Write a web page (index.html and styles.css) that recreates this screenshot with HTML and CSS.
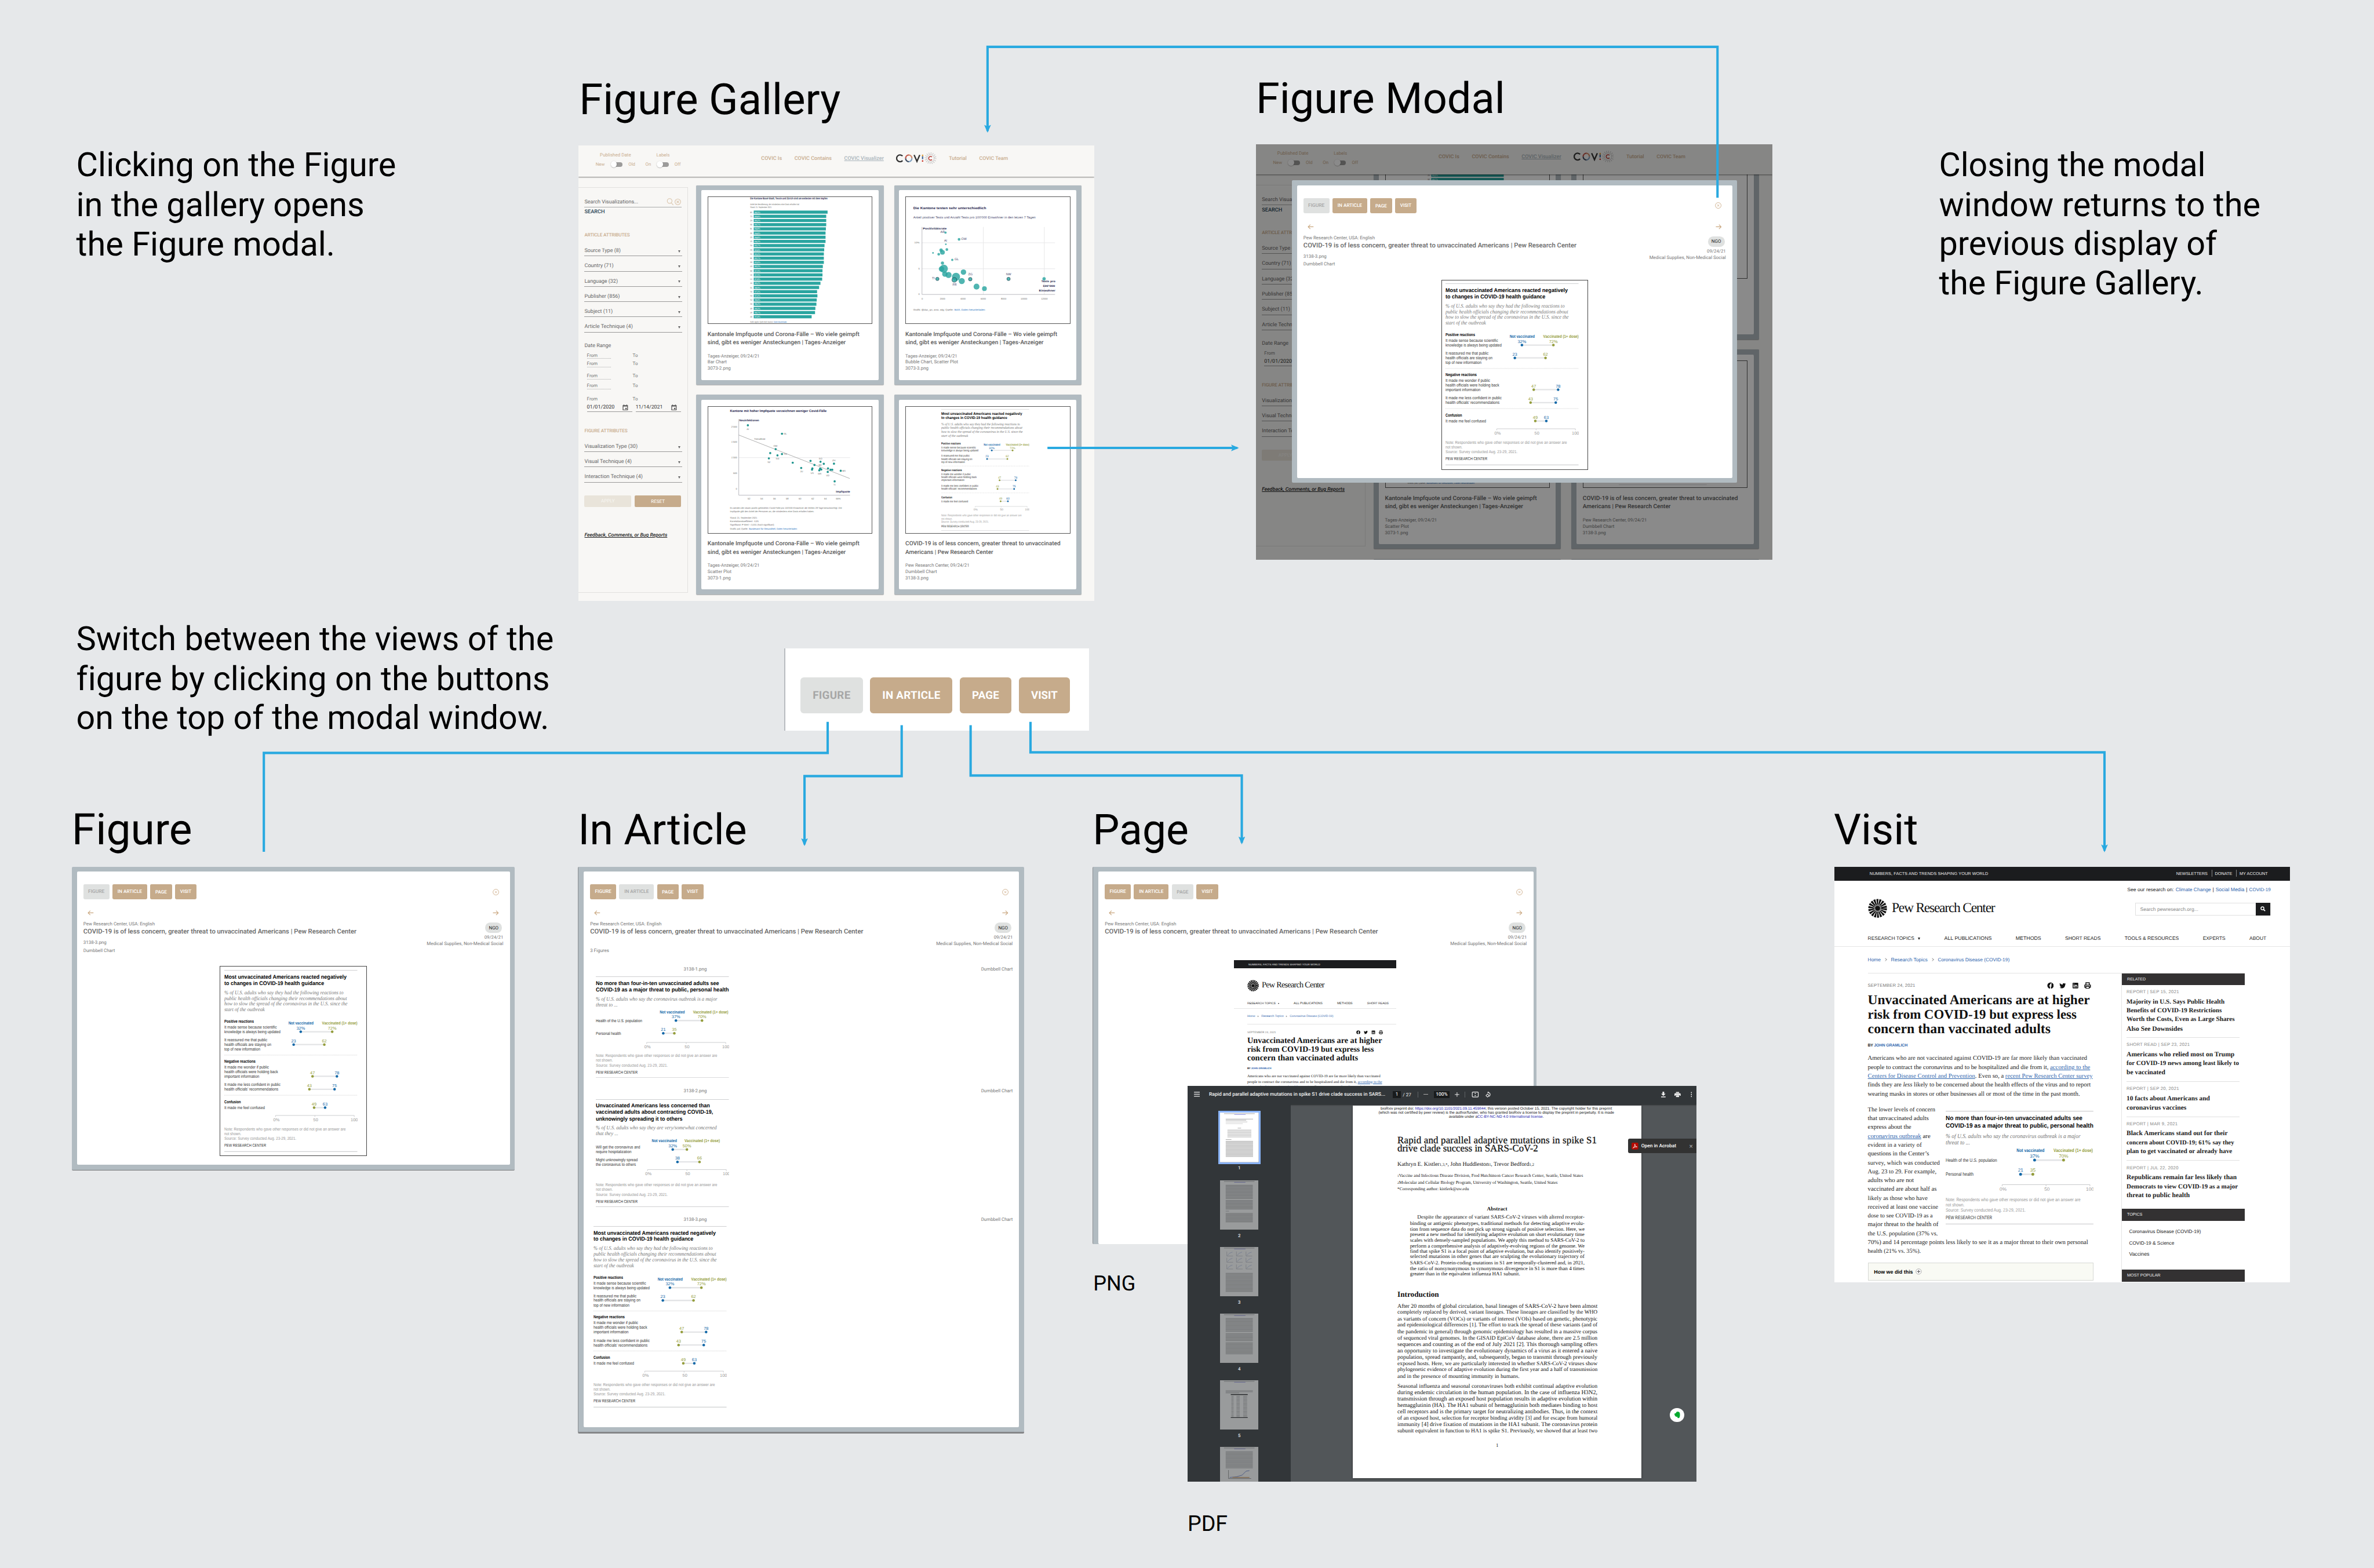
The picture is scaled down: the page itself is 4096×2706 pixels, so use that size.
FILE: index.html
```html
<!DOCTYPE html>
<html lang="en">
<head>
<meta charset="utf-8">
<title>COVIC figure views</title>
<link rel="stylesheet" href="styles.css">
</head>
<body>
<main class="board">
  <p class="note note-open"><span data-w="566">Clicking on the Figure</span><br><span data-w="510">in the gallery opens</span><br><span data-w="458">the Figure modal.</span></p>
  <p class="note note-close"><span data-w="472">Closing the modal</span><br><span data-w="569">window returns to the</span><br><span data-w="492">previous display of</span><br><span data-w="468">the Figure Gallery.</span></p>
  <p class="note note-switch"><span data-w="845">Switch between the views of the</span><br><span data-w="836">figure by clicking on the buttons</span><br><span data-w="837">on the top of the modal window.</span></p>

  <h2 class="label label-gallery"><span data-w="463">Figure Gallery</span></h2>
  <h2 class="label label-modal"><span data-w="441">Figure Modal</span></h2>
  <h2 class="label label-figure"><span data-w="213">Figure</span></h2>
  <h2 class="label label-article"><span data-w="299">In Article</span></h2>
  <h2 class="label label-page"><span data-w="170">Page</span></h2>
  <h2 class="label label-visit"><span data-w="149">Visit</span></h2>
  <p class="caption caption-png"><span data-w="75">PNG</span></p>
  <p class="caption caption-pdf"><span data-w="71">PDF</span></p>

  <section class="shot shot-gallery" data-view="gallery"></section>
  <section class="shot shot-modal">
    <div data-view="gallery-scrolled"></div>
    <div class="shade"></div>
    <div class="detail dialog" data-view="figure"></div>
  </section>

  <section class="switcher">
    <span class="btn off"><b data-w="67">FIGURE</b></span>
    <span class="btn"><b data-w="103">IN ARTICLE</b></span>
    <span class="btn"><b data-w="48">PAGE</b></span>
    <span class="btn"><b data-w="47">VISIT</b></span>
  </section>

  <section class="shot detail shot-figure" data-view="figure"></section>
  <section class="shot detail shot-article" data-view="article"></section>
  <section class="shot detail shot-page" data-view="page"></section>

  <section class="shot shot-pdf">
    <header class="pdf-bar">
      <svg class="pdf-menu" viewBox="0 0 12 10"><path d="M0 1h12M0 5h12M0 9h12" stroke="#f1f1f1" stroke-width="1.6"/></svg>
      <b class="pdf-name" data-w="312">Rapid and parallel adaptive mutations in spike S1 drive clade success in SARS...</b>
      <span class="pdf-field">1</span><span class="pdf-total" data-w="15">/ 27</span>
      <i class="pdf-sep"></i>
      <span class="pdf-minus"></span><span class="pdf-field wide">100%</span><svg class="pdf-plus" viewBox="0 0 8 8"><path d="M0 4h8M4 0v8" stroke="#f1f1f1"/></svg>
      <i class="pdf-sep"></i>
      <svg class="pdf-fit" viewBox="0 0 12 10"><rect x=".7" y=".7" width="10.6" height="8.6" rx="1" fill="none" stroke="#f1f1f1" stroke-width="1.2"/><path d="M6 2l1.6 1.8H4.4zM6 8L4.4 6.200h3.200z" fill="#f1f1f1"/></svg>
      <svg class="pdf-rotate" viewBox="0 0 12 12"><path d="M5 5l3 3-3 3-3-3z" fill="none" stroke="#f1f1f1" stroke-width="1.2"/><path d="M6 2a4.200 4.200 0 0 1 1.500 8.100" fill="none" stroke="#f1f1f1" stroke-width="1.2"/><path d="M7 0v4L4.600 2z" fill="#f1f1f1"/></svg>
      <svg class="pdf-down" viewBox="0 0 10 10"><path d="M3.500 0h3v3.500H9L5 7.500 1 3.500h2.500zM1 8.600h8V10H1z" fill="#f1f1f1"/></svg>
      <svg class="pdf-print" viewBox="0 0 12 10"><path d="M3 0h6v2H3zM1.500 2.600h9A1.500 1.500 0 0 1 12 4v3.500h-2V6H2v1.500H0V4a1.500 1.500 0 0 1 1.500-1.400zM3 6.500h6V10H3z" fill="#f1f1f1"/></svg>
      <svg class="pdf-more" viewBox="0 0 3 10"><circle cx="1.500" cy="1.500" r="1.100" fill="#f1f1f1"/><circle cx="1.500" cy="5" r="1.100" fill="#f1f1f1"/><circle cx="1.500" cy="8.500" r="1.100" fill="#f1f1f1"/></svg>
    </header>
    <div class="pdf-body">
      <aside class="pdf-thumbs" id="thumbs"></aside>
      <article class="paper" id="paper"></article>
      <div class="acrobat"><svg viewBox="0 0 12 12"><rect width="12" height="12" rx="2" fill="#b30b00"/><path d="M2.500 9.500C5 8 6 5 5.800 2.500c.4 3 2 5 4 5-2.500-.5-5 .3-7.300 2z" fill="none" stroke="#fff" stroke-width=".9"/></svg><b data-w="62">Open in Acrobat</b><i>×</i></div>
      <div class="evernote"><svg viewBox="0 0 14 14"><path d="M4.500 3.500L6 1.500c2-.5 5 0 5.500 2 .6 3 .4 6-.5 8-.8 1.500-3.500 1.500-3.700 0-.1-1.300 1.200-1.500 1.700-1.300-1 .1-3.500.4-4.800-.5C2.500 8.500 1.800 6 2.200 5c.6-.9 1.600-.5 2.500-.8z" fill="#00a82d"/></svg></div>
    </div>
  </section>

  <section class="shot shot-visit">
    <div class="site" id="site">
      <div class="site-top"><span class="tag" data-w="210">NUMBERS, FACTS AND TRENDS SHAPING YOUR WORLD</span><span class="acct"><span data-w="55.500">NEWSLETTERS</span><span data-w="30.500">DONATE</span><span data-w="50">MY ACCOUNT</span></span></div>
      <header class="site-head">
        <div class="pew">
          <svg viewBox="-17 -17 34 34"><circle r="11.500" fill="none" stroke="#111" stroke-width="10" stroke-dasharray="2.750 1.265"/><circle r="7" fill="none" stroke="#111" stroke-width="6" stroke-dasharray="1.200 1.243"/><circle r="4.400" fill="#111"/></svg>
          <span data-w="182">Pew Research Center</span>
        </div>
        <div class="site-tools">
          <p><span data-w="82.500">See our research on:</span> <a data-w="62.500">Climate Change</a> <em>|</em> <a data-w="51">Social Media</a> <em>|</em> <a data-w="38">COVID-19</a></p>
          <div class="site-search"><span data-w="103">Search pewresearch.org...</span><i><svg viewBox="0 0 10 10"><circle cx="4" cy="4" r="2.900" fill="none" stroke="#fff" stroke-width="1.600"/><path d="M6 6l3.300 3.300" stroke="#fff" stroke-width="2"/></svg></i></div>
        </div>
      </header>
      <nav class="site-nav"><span><span data-w="82.500">RESEARCH TOPICS</span><i class="caret"></i></span><span data-w="84">ALL PUBLICATIONS</span><span data-w="45">METHODS</span><span data-w="63">SHORT READS</span><span data-w="96">TOOLS &amp; RESOURCES</span><span data-w="40">EXPERTS</span><span data-w="30">ABOUT</span></nav>
      <p class="crumbs"><a data-w="23">Home</a><i></i><a data-w="65">Research Topics</a><i></i><a data-w="127">Coronavirus Disease (COVID-19)</a></p>
      <div class="site-cols">
        <article class="story">
          <div class="story-date"><span data-w="84">SEPTEMBER 24, 2021</span>
            <span class="share">
              <svg viewBox="0 0 12 12"><circle cx="6" cy="6" r="5.600" fill="#111"/><path d="M5.100 11.800V7.400H3.800V5.700h1.300V4.500c0-1.300.8-2.100 2-2.100h1.100V4h-.7c-.5 0-.7.300-.7.700v1h1.400l-.3 1.700H6.800v4.400z" fill="#fff"/></svg>
              <svg viewBox="0 0 12 12"><path d="M11.600 2.800l-1.200.3.900-1.200-1.500.6C8.200.900 5.800 2 6 4.400 3.900 4.400 2.200 3.400 1 1.900c-.7 1.300-.2 2.600.8 3.300l-1-.3c0 1.200.8 2 1.900 2.300H1.600C2 8.200 2.800 8.800 3.900 8.800 2.800 9.600 1.600 9.900.4 9.800c4.800 2.700 10.200-.3 10.100-5.700z" fill="#111"/></svg>
              <svg viewBox="0 0 12 12"><rect x="1" y="1" width="10" height="10" rx="1" fill="#111"/><path d="M3.200 5v4.500M3.200 2.600v1.200M5.500 9.500V5m0 2c0-2.300 3.200-2.300 3.200 0v2.500" fill="none" stroke="#fff" stroke-width="1.300"/></svg>
              <svg viewBox="0 0 12 12"><path d="M3 4.500V1h6v3.500M3 9H1V5h10v4H9M3 7.500h6V11H3z" fill="none" stroke="#111" stroke-width="1.500"/></svg>
            </span>
          </div>
          <h1><span data-w="393">Unvaccinated Americans are at higher</span><br><span data-w="369.600">risk from COVID-19 but express less</span><br><span data-w="323.600">concern than vaccinated adults</span></h1>
          <p class="byline"><span data-w="9">BY</span> <a data-w="59.500">JOHN GRAMLICH</a></p>
          <p class="copy"><span data-w="388.400">Americans who are not vaccinated against COVID-19 are far more likely than vaccinated</span><br><span data-w="393.700">people to contract the coronavirus and to be hospitalized and die from it, <a>according to the</a></span><br><span data-w="398"><a>Centers for Disease Control and Prevention</a>. Even so, a <a>recent Pew Research Center survey</a></span><br><span data-w="394.600">finds they are <i>less</i> likely to be concerned about the health effects of the virus and to report</span><br><span data-w="375.500">wearing masks in stores or other businesses all or most of the time in the past month.</span></p>
          <div class="copy-row">
            <p class="copy"><span data-w="119.500">The lower levels of concern</span><br><span data-w="108">that unvaccinated adults</span><br><span data-w="77">express about the</span><br><span data-w="111"><a>coronavirus outbreak</a> are</span><br><span data-w="95.500">evident in a variety of</span><br><span data-w="108.500">questions in the Center’s</span><br><span data-w="127.500">survey, which was conducted</span><br><span data-w="121.500">Aug. 23 to 29. For example,</span><br><span data-w="81.500">adults who are not</span><br><span data-w="122">vaccinated are about half as</span><br><span data-w="106">likely as those who have</span><br><span data-w="124.500">received at least one vaccine</span><br><span data-w="115">dose to see COVID-19 as a</span><br><span data-w="125">major threat to the health of</span><br><span data-w="124">the U.S. population (37% vs.</span></p>
            <div class="inset" data-figure="threat"></div>
          </div>
          <p class="copy tail"><span data-w="390">70%) and 14 percentage points less likely to see it as a major threat to their own personal</span><br><span data-w="94">health (21% vs. 35%).</span></p>
          <div class="how"><b data-w="69">How we did this</b><svg viewBox="0 0 12 12"><circle cx="6" cy="6" r="5.200" fill="#fff" stroke="#888" stroke-width=".8"/><path d="M6 3v6M3 6h6" stroke="#666" stroke-width="1.400"/></svg></div>
        </article>
        <aside class="rail">
          <h3><span data-w="33">RELATED</span></h3>
          <div class="rel"><small data-w="93">REPORT | SEP 15, 2021</small><p><span data-w="173.500">Majority in U.S. Says Public Health</span><br><span data-w="168.500">Benefits of COVID-19 Restrictions</span><br><span data-w="191.500">Worth the Costs, Even as Large Shares</span><br><span data-w="99.500">Also See Downsides</span></p></div>
          <div class="rel"><small data-w="112">SHORT READ | SEP 23, 2021</small><p><span data-w="191">Americans who relied most on Trump</span><br><span data-w="199">for COVID-19 news among least likely to</span><br><span data-w="68.500">be vaccinated</span></p></div>
          <div class="rel"><small data-w="93">REPORT | SEP 20, 2021</small><p><span data-w="147.500">10 facts about Americans and</span><br><span data-w="106">coronavirus vaccines</span></p></div>
          <div class="rel"><small data-w="90.500">REPORT | MAR 9, 2021</small><p><span data-w="179">Black Americans stand out for their</span><br><span data-w="190.500">concern about COVID-19; 61% say they</span><br><span data-w="187">plan to get vaccinated or already have</span></p></div>
          <div class="rel"><small data-w="92">REPORT | JUL 22, 2020</small><p><span data-w="195">Republicans remain far less likely than</span><br><span data-w="197">Democrats to view COVID-19 as a major</span><br><span data-w="112">threat to public health</span></p></div>
          <h3 class="topics"><span data-w="27">TOPICS</span></h3>
          <ul><li><span data-w="127">Coronavirus Disease (COVID-19)</span></li><li><span data-w="80">COVID-19 &amp; Science</span></li><li><span data-w="36">Vaccines</span></li></ul>
          <h3><span data-w="59">MOST POPULAR</span></h3>
        </aside>
      </div>
    </div>
  </section>

  <svg class="wires" viewBox="0 0 4202 2776">
    <defs><marker id="tip" viewBox="0 0 14 12" markerWidth="14" markerHeight="12" refX="11" refY="6" orient="auto" markerUnits="userSpaceOnUse"><path d="M0 0L14 6 0 12l3-6z" fill="#29a9e0"/></marker></defs>
    <path d="M3040 350V83H1748V232" marker-end="url(#tip)"/>
    <path d="M1854 793H2190" marker-end="url(#tip)"/>
    <path d="M1465 1278V1333H467V1508"/>
    <path d="M1596 1284V1374H1424V1495" marker-end="url(#tip)"/>
    <path d="M1718 1284V1373H2198V1492" marker-end="url(#tip)"/>
    <path d="M1824 1278V1332H3725V1506" marker-end="url(#tip)"/>
  </svg>
</main>
<script src="script.js"></script>
</body>
</html>
```
FILE: styles.css
```css
* { box-sizing: border-box; }
html, body { margin: 0; background: #e6e8ea; overflow: hidden; }
body { font-family: Roboto, "Liberation Sans", sans-serif; text-rendering: geometricPrecision; }
h1, h2, h3, p, ul { margin: 0; padding: 0; list-style: none; }
svg { display: block; }
[data-w] { display: inline-block; flex: none; vertical-align: top; white-space: pre; }

.board { position: relative; width: 4202px; height: 2776px; zoom: 0.97477; overflow: hidden; background: #e6e8ea; color: #000; }

.note, .label, .caption, .shot, .switcher, .wires { position: absolute; }
.note { font-size: 60px; line-height: 70px; white-space: nowrap; }
.note-open { left: 135px; top: 258px; }
.note-close { left: 3432px; top: 258px; }
.note-switch { left: 135px; top: 1097px; }
.label { font-size: 76px; line-height: 90px; font-weight: 400; white-space: nowrap; }
.label-gallery { left: 1025px; top: 132px; }
.label-modal { left: 2223px; top: 130px; }
.label-figure { left: 127px; top: 1425px; }
.label-article { left: 1023px; top: 1425px; }
.label-page { left: 1934px; top: 1425px; }
.label-visit { left: 3246px; top: 1425px; }
.caption { font-size: 38px; line-height: 46px; }
.caption-png { left: 1935px; top: 2250px; }
.caption-pdf { left: 2102px; top: 2676px; }
.wires { left: 0; top: 0; width: 4202px; height: 2776px; fill: none; stroke: #29a9e0; stroke-width: 4.2; }
.wires marker path { stroke: none; }

.shot { overflow: hidden; }
.shot-gallery { left: 1024px; top: 258px; width: 913px; height: 806px; }
.shot-modal { left: 2223px; top: 255px; width: 914px; height: 736px; }
.shot-figure { left: 127px; top: 1535px; width: 784px; height: 537px; border-bottom: 2px solid #77787a; }
.shot-article { left: 1023px; top: 1535px; width: 790px; height: 1003px; border-bottom: 3.500px solid #858688; border-left: 2px solid #8b8f92; }
.shot-page { left: 1934px; top: 1535px; width: 786px; height: 668px; border-left: 2px solid #8b8f92; }
.shot-pdf { left: 2102px; top: 1922px; width: 901px; height: 701px; }
.shot-visit { left: 3247px; top: 1535px; width: 806px; height: 735px; }
.shade { position: absolute; inset: 0; background: rgba(0, 0, 0, .46); }
.dialog { position: absolute; left: 63.500px; top: 64px; width: 788.500px; height: 536px; }

/* Gallery */
.gallery { height: 806px; background: #f8f7f5; color: #666; overflow: hidden; }
.g-head { position: relative; display: flex; height: 55px; background: #f8f7f5; box-shadow: 0 1px 2px rgba(0, 0, 0, .5); color: #c9ad8f; font-size: 8.200px; }
.toggle { padding-top: 10px; width: 70px; margin-left: 30.400px; text-align: center; }
.toggle + .toggle { width: 62.500px; margin-left: 18px; }
.toggle p { line-height: 14px; }
.toggle div { display: flex; justify-content: space-between; align-items: center; height: 18px; }
.switch { display: flex; align-items: center; width: 21px; height: 8px; border-radius: 4px; background: linear-gradient(90deg, transparent 20%, #9c9b9a 20%); }
.switch i { width: 11px; height: 11px; border-radius: 50%; background: #fff; box-shadow: 0 .5px 1.500px rgba(0, 0, 0, .4); }
.g-nav { display: flex; align-items: center; gap: 22.200px; height: 46px; margin-left: 142.500px; font-size: 8.800px; font-weight: 500; }
.g-nav .on { color: #a9b4bb; text-decoration: underline; }
.g-nav svg { width: 71px; height: 22px; margin-top: -3px; }
.g-body { display: flex; height: 751px; overflow: hidden; align-items: flex-start; }
.side { flex: none; width: 193.500px; height: 717.500px; margin-top: 18.500px; padding: 16.800px 10.600px 0; border: solid #e2e1df; border-width: 1px 1px 1px 0; font-size: 9.200px; }
.search { display: flex; align-items: center; justify-content: space-between; height: 18px; width: 172px; border-bottom: 1px solid #aaa; }
.search svg { width: 28px; height: 13px; }
.side .go { margin-top: 1.500px; line-height: 14px; color: #2d4858; font-weight: 500; }
.side h4 { margin: 26.400px 0 3.500px; line-height: 14px; font-size: 9px; font-weight: 500; color: #c9ad8f; }
.pick { display: flex; align-items: center; justify-content: space-between; width: 173px; height: 27px; padding: 10.500px 3px 0 0; border-bottom: 1px solid #999; line-height: 16px; }
.caret { display: inline-block; border: 2.800px solid transparent; border-top: 5px solid #666; border-bottom: 0; }
.side .range { margin-top: 17.200px; line-height: 14px; }
.ghosts { display: grid; grid-template-rows: 13px 17px 26px 9px; height: 77.300px; margin-top: 3px; align-items: center; }
.from-to { display: grid; grid-template-columns: 81px 1fr; padding-left: 4.200px; font-size: 8.200px; line-height: 14px; color: #777; }
.ghosts .from-to { height: 10px; line-height: 10px; }
.ghosts .from-to span:first-child { width: 43px; border-bottom: 1px dotted #aaa; }
.from { margin-top: 3px; }
.gallery .ghosts + .from { margin-top: 0; }
.dates { display: flex; gap: 5.400px; padding-left: 4.200px; color: #333; font-size: 9.200px; }
.dates div { display: flex; justify-content: space-between; align-items: center; width: 81px; height: 15.300px; padding-right: 8px; border-bottom: 1px solid #999; }
.dates svg { width: 10px; height: 11px; }
.side .figs { margin-top: 26.700px; margin-bottom: 3.300px; }
.side .acts { display: flex; gap: 6px; margin-top: 22.700px; }
.acts > span { display: flex; align-items: center; justify-content: center; width: 84.700px; height: 20.300px; border-radius: 2px; background: #c6ab8b; color: #fff; font-size: 8.800px; }
.acts > .dim { background: #e9e4da; color: #f8f7f3; }
.side .fb { margin-top: 44.700px; line-height: 14px; font-style: italic; color: #222; text-decoration: underline; font-weight: 500; font-size: 9px; }
.side .fb span { text-decoration: underline; }
.cards { display: grid; grid-template-columns: 331.600px 331.600px; grid-auto-rows: 353.500px; gap: 17.500px 18.500px; margin: 15px 0 0 14.900px; }
.card { padding: 9px; background: #b1bbc1; border-radius: 2px; box-shadow: 0 1px 1px rgba(0, 0, 0, .3); }
.card > div { height: 335.500px; padding: 11px; background: #fff; border-radius: 2px; }
.plot { width: 292px; height: 225.500px; border: 1px solid #555; overflow: hidden; }
.plot svg { width: 290px; height: 223.500px; }
.plot .chart { width: 156px; height: 215.500px; margin: 4px 0 0 63px; }
.card h5 { margin: 12px 0 0; font-size: 9.900px; line-height: 14.700px; font-weight: 500; color: #5a5a5a; }
.card p { margin-top: 10.500px; font-size: 8.200px; line-height: 11.200px; color: #777; }
.scrolled .side { height: 640px; }
.scrolled .g-head { height: 54px; }
.scrolled .cards { margin-top: -61.500px; }

/* Detail window */
.detail { padding: 9px 8.700px 9px 9px; background: #b1bbc1; border-radius: 2px; overflow: hidden; }
.sheet { height: 100%; padding: 22.400px 11.500px 0; background: #fff; border-radius: 2px; color: #777; font-size: 8.200px; }
.shot-article.detail, .shot-page.detail { padding: 8px 9px 8px; }
.shot-figure.detail { padding-top: 8px; }
.shot-page.detail { padding-bottom: 0; padding-right: 6px; }
.tabs { display: flex; gap: 5.400px; height: 26.700px; }
.tabs span { display: flex; align-items: center; justify-content: center; border-radius: 2.500px; background: #c6ab8b; color: #fff; font-size: 8.200px; }
.tabs b { font-weight: 500; }
.tabs .off { background: #dfe1e0; color: #a6a6a6; }
.tabs svg { width: 11.500px; height: 11.500px; margin: 8px 7.500px 0 auto; }
.arrows { display: flex; justify-content: space-between; height: 16px; margin-top: 16.500px; padding: 3.500px 7.500px 0; }
.arrows svg { width: 11px; height: 9px; }
.info { display: flex; justify-content: space-between; margin-top: 6px; height: 59px; }
.info h6 { margin: 0 0 5.300px; font-size: 11px; line-height: 14px; font-weight: 500; color: #666; }
.info p { line-height: 12px; }
.info .line { line-height: 14px; height: 14px; }
.meta { text-align: right; }
.meta p { line-height: 11px; }
.pill { display: flex; align-items: center; justify-content: center; width: 30px; height: 18px; margin: 3px 2px 3.500px auto; border-radius: 9px; background: #dfe1e0; color: #222; }
.frame { width: 260px; height: 336.500px; margin: 20.500px auto 0; padding: 6px 0 0 7px; border: 1px solid #444; }
.frame .chart { width: 236px; height: 322px; }
.entry { display: flex; justify-content: space-between; line-height: 14px; height: 14px; padding-left: 165.500px; }
.entries .chart { margin-left: 10px; width: 236px; }
.entries > :last-child .chart { margin-left: 6.300px; }
.excerpt { width: 287px; margin: 10.500px 0 0 228.500px; overflow: hidden; }
.excerpt .site { zoom: .607; margin-left: -20px; height: 1000px; }

.chart text { font-family: "Liberation Sans", Arial, sans-serif; font-size: 7.600px; fill: #333; }
.chart .h { font-weight: 700; font-size: 9.800px; fill: #000; }
.chart .i { font-family: "Liberation Serif", serif; font-style: italic; font-size: 9.600px; fill: #777; }
.chart .b { font-weight: 700; fill: #000; }
.chart .n { fill: #999; }
.chart .blue { fill: #1268a8; }
.chart .green { fill: #949d3c; }
.chart .k { font-weight: 700; }
.plot .title { font: 700 6px "Liberation Sans", sans-serif; fill: #1b1b4b; }
.plot .t { font: 5.500px "Liberation Sans", sans-serif; fill: #44446a; }
.plot .s { font: 4.200px "Liberation Sans", sans-serif; fill: #666; }
.plot .m { font: 700 4.800px "Liberation Sans", sans-serif; fill: #1b1b4b; }
.plot .a { fill: #1268b8; }

/* Enlarged tab buttons */
.switcher { left: 1388px; top: 1148px; width: 540px; height: 146px; padding: 51px 0 0 27px; display: flex; align-items: flex-start; gap: 13px; background: #fff; border-left: 3px solid #b8bcc0; }
.btn { display: flex; align-items: center; justify-content: center; width: 110px; height: 64px; border-radius: 6px; background: #c6ab8b; color: #fff; font-size: 17.500px; }
.btn:nth-child(2) { width: 146px; }
.btn:nth-child(n+3) { width: 91px; }
.btn b { font-weight: 700; }
.btn.off { background: #dfe1e0; color: #a6a6a6; }

/* PDF viewer */
.shot-pdf { background: #525659; }
.pdf-bar { display: flex; align-items: center; height: 33.500px; padding-bottom: 2px; background: #323639; color: #f1f1f1; font-size: 8.600px; position: relative; box-shadow: 0 1px 2px rgba(0, 0, 0, .5); }
.pdf-bar > * { flex: none; }
.pdf-menu { width: 11px; height: 9px; margin: 0 16px 0 11px; }
.pdf-name { margin-right: 13px; font-weight: 500; }
.pdf-field { width: 15px; height: 13px; line-height: 13px; text-align: center; background: #191b1c; margin-right: 3px; }
.pdf-field.wide { width: 28px; margin-right: 9px; font-weight: 500; }
.pdf-sep { width: 1px; height: 10px; margin: 0 10px 0 11px; background: #5f6366; }
.pdf-minus { width: 8px; height: 1px; margin-right: 10px; background: #aaa; }
.pdf-plus { width: 8px; height: 8px; }
.pdf-plus + .pdf-sep { margin: 0 12px 0 9px; }
.pdf-fit { width: 13px; height: 10px; margin-right: 10px; }
.pdf-bar .pdf-rotate { width: 11px; height: 12px; margin-right: auto; }
.pdf-down { width: 10px; height: 10px; margin-right: 15px; }
.pdf-print { width: 11px; height: 10px; margin-right: 17px; }
.pdf-more { width: 3px; height: 10px; margin-right: 8px; }
.pdf-body { display: flex; height: 667.500px; position: relative; }
.pdf-thumbs { width: 183px; padding-top: 11.500px; background: #323639; color: #e8eaed; font-size: 8px; font-weight: 500; text-align: center; overflow: hidden; }
.thumb { height: 118px; }
.thumb svg { width: 68px; height: 87.500px; margin: 0 auto 6px; opacity: .5; }
.thumb:first-child { height: 122.500px; }
.thumb:first-child svg { box-sizing: content-box; width: 68.500px; height: 88px; border: 3.500px solid #8ab4f8; opacity: 1; margin-bottom: 2px; }
.thumb p { line-height: 11px; }
.paper { width: 511px; height: 660.500px; margin: 1.500px 0 0 109.500px; padding: 4px 0 0 79px; background: #fff; box-shadow: 0 1px 3px rgba(0, 0, 0, .6); color: #111; font-family: "Liberation Serif", serif; white-space: nowrap; }
.paper .stamp { width: 420px; margin-left: -35px; font: 6.400px/7px "Liberation Sans", sans-serif; display: flex; flex-direction: column; align-items: center; }
.paper .stamp a { color: #2020b0; }
.paper h1 { margin-top: 29.500px; font-size: 15.800px; line-height: 14.200px; font-weight: 400; -webkit-text-stroke: .3px; }
.paper .auth { margin-top: 14.500px; font-size: 10.500px; line-height: 14px; }
.paper sup { font-size: 70%; line-height: 0; vertical-align: 35%; }
.paper .aff { margin-top: 7.500px; font-size: 8.200px; line-height: 11.500px; }
.paper h2 { width: 353px; margin-top: 24.500px; text-align: center; font-size: 8.600px; line-height: 12px; }
.paper .abs { margin: 4.700px 0 0 22.200px; font-size: 8.700px; line-height: 9.950px; }
.paper .abs span:first-child { margin-left: 13px; }
.paper h3 { margin-top: 23.500px; font-size: 12.400px; line-height: 14px; }
.paper .txt { margin-top: 9.200px; font-size: 9.500px; line-height: 11.280px; }
.paper .txt + .txt { margin-top: 5.800px; }
.paper .num { width: 353px; margin-top: 14px; text-align: center; font-size: 9px; line-height: 12px; }
.acrobat { position: absolute; left: 780px; top: 60.500px; width: 121px; height: 26px; display: flex; align-items: center; background: #323232; border-radius: 3px 0 0 3px; color: #fff; font-size: 8.600px; }
.acrobat svg { width: 12px; height: 12px; margin: 0 5px 0 6px; }
.acrobat b { font-weight: 500; }
.acrobat i { margin-left: 23px; font-style: normal; font-size: 12px; color: #aaa; }
.evernote { position: absolute; left: 854px; top: 537px; width: 25px; height: 25px; border-radius: 50%; background: #fff; padding: 5.500px; }
.evernote svg { width: 14px; height: 14px; }

/* Pew Research site */
.site { width: 806px; height: 735px; background: #fff; color: #222; font-family: "Liberation Sans", Arial, sans-serif; overflow: hidden; }
.site a { color: #2f66ae; }
.site-top { display: flex; align-items: center; justify-content: space-between; height: 24px; padding: 0 39px 0 62.300px; background: #1b1c1e; color: #eee; font-size: 6.800px; }
.acct { display: flex; gap: 13px; }
.acct span + span { position: relative; }
.acct span + span::before { content: ""; position: absolute; left: -6px; top: -3px; width: 1px; height: 13px; background: #888; }
.site-head { display: flex; justify-content: space-between; height: 91px; padding: 9.500px 34px 0 59.500px; }
.pew { display: flex; align-items: center; gap: 8px; height: 80px; font: 26px "Liberation Serif", serif; color: #111; }
.pew svg { width: 34px; height: 34px; }
.site-tools { display: flex; flex-direction: column; align-items: flex-end; }
.site-tools p { display: flex; gap: 3px; line-height: 14px; font-size: 9px; }
.site-tools em { font-style: normal; }
.site-search { display: flex; justify-content: space-between; align-items: center; width: 240px; height: 23px; margin-top: 15.500px; padding-left: 8px; border: 1px solid #e0e0e0; font-size: 9px; color: #888; }
.site-search i { display: flex; align-items: center; justify-content: center; width: 25px; height: 23px; background: #1b1c1e; }
.site-search svg { width: 9px; height: 9px; }
.site-nav { display: flex; justify-content: space-between; height: 26.500px; padding: 4px 41.500px 0 59px; border-bottom: 1px solid #e4e4e4; font-size: 9.200px; line-height: 15px; }
.site-nav > span:first-child { width: 93px; display: flex; align-items: center; justify-content: space-between; height: 15px; }
.site-nav .caret { border-top-color: #222; }
.crumbs { display: flex; align-items: center; height: 46.500px; margin-left: 59px; width: 667px; border-bottom: 1px solid #e4e4e4; font-size: 8.800px; }
.crumbs i { width: 4px; height: 4px; margin: 0 8px 0 6px; border: solid #999; border-width: 1px 1px 0 0; transform: rotate(45deg); }
.site-cols { display: flex; justify-content: space-between; width: 667px; margin-left: 59px; }
.story { width: 400px; }
.story-date { display: flex; justify-content: space-between; align-items: center; height: 12px; margin-top: 15.500px; padding-right: 5px; font-size: 7.200px; color: #777; }
.share { display: flex; gap: 10px; }
.share svg { width: 12px; height: 12px; }
.story h1 { margin-top: 7.800px; font: 700 23px/25.600px "Liberation Serif", serif; color: #111; white-space: nowrap; }
.byline { margin-top: 9.500px; font-size: 7.700px; line-height: 14px; font-weight: 700; display: flex; gap: 2px; }
.copy { margin-top: 8px; font: 10.300px/15.670px "Liberation Serif", serif; color: #222; white-space: nowrap; }
.copy a { text-decoration: underline; text-underline-offset: 1.500px; }
.copy-row { display: flex; justify-content: space-between; margin-top: 12.300px; }
.copy-row .copy { margin: 0; }
.inset { width: 262px; padding-top: 9.500px; }
.inset .chart { width: 262px; height: 201px; }
.copy.tail { margin-top: 0; }
.how { display: flex; align-items: center; gap: 5px; height: 31.500px; margin-top: 12px; padding-left: 10px; border: 1px solid #d6d8d4; background: #f9faf4; font-size: 9px; color: #000; }
.how svg { width: 11px; height: 11px; }
.rail { width: 218px; border-left: 1px solid #e4e4e4; }
.rail h3 { height: 21px; line-height: 21px; padding-left: 9px; background: #333132; color: #eee; font-size: 7.200px; font-weight: 400; }
.rel { width: 200px; margin-left: 8px; padding-top: 7.500px; border-bottom: 1px solid #e0e0e0; font-size: 7.200px; line-height: 11px; }
.rel small { font-size: 7.200px; color: #888; }
.rel p { margin-top: 4px; padding-bottom: 7.300px; font: 700 10.800px/15.670px "Liberation Serif", serif; color: #222; white-space: nowrap; }
.rel:nth-of-type(5) { border: 0; }
.rail .topics { margin-top: 8px; }
.rail ul { padding: 10px 0 0 12.500px; height: 87px; font-size: 8.800px; line-height: 20px; color: #222; }
```
FILE: script.js
```js
const t = (text, w, cls = "") => `<span class="${cls}" data-w="${w}">${text}</span>`;
const st = (x, y, text, w, cls = "") =>
  `<text x="${x}" y="${y}" dominant-baseline="central" class="${cls}"${w ? ` textLength="${w}" lengthAdjust="spacingAndGlyphs"` : ""}>${text}</text>`;

/* ---- Dumbbell charts ---- */
const NOTE = ["Note: Respondents who gave other responses or did not give an answer are", "not shown.", "Source: Survey conducted Aug. 23-29, 2021.", "PEW RESEARCH CENTER"];

function dumbbell({ height, texts, legend, rows, axis, dotted = [], note }) {
  const x = v => axis.x0 + (axis.x1 - axis.x0) * v / 100;
  let s = `<path d="M0 .5H235.500M0 ${height - .5}H235.500" stroke="#cfd0d1" stroke-width="1.300"/>`;
  s += texts.map(a => st(...a)).join("");
  s += st(legend.a, legend.y, "Not vaccinated", 44.5, "blue k") + st(legend.b, legend.y, "Vaccinated (1+ dose)", 62.5, "green k");
  for (const [y, nv, vac, unit = ""] of rows) {
    s += `<path d="M${x(nv)} ${y}H${x(vac)}" stroke="#e3e4e6" stroke-width="2.400"/>`;
    for (const [v, c] of [[nv, "blue"], [vac, "green"]])
      s += `<circle cx="${x(v)}" cy="${y}" r="2.300" class="${c}"/><text x="${x(v)}" y="${y - 6.5}" text-anchor="middle" dominant-baseline="central" class="${c}">${v}${unit}</text>`;
  }
  s += dotted.map(y => `<path d="M0 ${y}H235.500" stroke="#bbb" stroke-width=".7" stroke-dasharray="1 1"/>`).join("");
  s += `<path d="M${axis.x0} ${axis.y + 2.5}v-2.500H${axis.x1}v2.500M${x(50)} ${axis.y}v2.500" fill="none" stroke="#c5c6c8" stroke-width=".9"/>`;
  s += [["0%", 0], ["50", 50], ["100", 99]].map(([l, v]) => `<text x="${x(v) + 1.5}" y="${axis.y + 7.6}" text-anchor="middle" dominant-baseline="central" class="n">${l}</text>`).join("");
  s += [215, 30, 127.5].map((w, i) => st(0, note + i * 8.4, NOTE[i], w, "n")).join("") + st(0, note + 29.2, NOTE[3], 74);
  return `<svg class="chart" viewBox="0 0 236 ${height}" height="${height}" preserveAspectRatio="none">${s}</svg>`;
}

const FIGURES = {
  threat: dumbbell({
    height: 180, axis: { x0: 90, x1: 230, y: 117 }, note: 140.4, legend: { a: 113, b: 172, y: 63 },
    texts: [[0, 12.5, "No more than four-in-ten unvaccinated adults see", 218, "h"], [0, 24.3, "COVID-19 as a major threat to public, personal health", 235.5, "h"],
      [0, 40.7, "% of U.S. adults who say the coronavirus outbreak is a major", 215, "i"], [0, 51, "threat to ...", 38.7, "i"],
      [0, 78.2, "Health of the U.S. population", 82], [0, 100.7, "Personal health", 44.5]],
    rows: [[78.2, 37, 70, "%"], [100.7, 21, 35]],
  }),
  spread: dumbbell({
    height: 191, axis: { x0: 91.5, x1: 231, y: 124.6 }, note: 151.6, legend: { a: 99, b: 157, y: 73.6 },
    texts: [[0, 12, "Unvaccinated Americans less concerned than", 202, "h"], [0, 23.6, "vaccinated adults about contracting COVID-19,", 207.6, "h"], [0, 35, "unknowingly spreading it to others", 153.5, "h"],
      [0, 51, "% of U.S. adults who say they are very/somewhat concerned", 214, "i"], [0, 61.4, "that they ...", 39.7, "i"],
      [0, 84.6, "Will get the coronavirus and", 78.5], [0, 92.5, "require hospitalization", 63],
      [0, 107, "Might unknowingly spread", 74], [0, 115.4, "the coronavirus to others", 71]],
    rows: [[89, 32, 50, "%"], [111, 38, 66]],
  }),
  guidance: dumbbell({
    height: 321, axis: { x0: 90.7, x1: 230, y: 256.7 }, note: 280.4, legend: { a: 113.5, b: 173, y: 93.8 }, dotted: [150.2, 221],
    texts: [[0, 12.4, "Most unvaccinated Americans reacted negatively", 216.5, "h"], [0, 23.6, "to changes in COVID-19 health guidance", 176.8, "h"],
      [0, 40, "% of U.S. adults who say they had the following reactions to", 210.8, "i"], [0, 50.2, "public health officials changing their recommendations about", 217, "i"],
      [0, 60, "how to slow the spread of the coronavirus in the U.S. since the", 218, "i"], [0, 70.2, "start of the outbreak", 71.7, "i"],
      [0, 90.9, "Positive reactions", 52.3, "b"], [0, 100.7, "It made sense because scientific", 93], [0, 109, "knowledge is always being updated", 99.4],
      [0, 123.3, "It reassured me that public", 76], [0, 131.3, "health officials are staying on", 83], [0, 139.6, "top of new information", 63.5],
      [0, 161, "Negative reactions", 55.4, "b"], [0, 171.3, "It made me wonder if public", 79], [0, 179.6, "health officials were holding back", 95], [0, 187.6, "important information", 62],
      [0, 202.5, "It made me less confident in public", 99.4], [0, 210.5, "health officials’ recommendations", 95.7],
      [0, 232.4, "Confusion", 29.3, "b"], [0, 243, "It made me feel confused", 71.7]],
    rows: [[109, 32, 72, "%"], [131.6, 23, 62], [187.6, 78, 47], [210.5, 75, 43], [243, 63, 49]],
  }),
};

/* ---- Tages-Anzeiger charts ---- */
const TEAL = "#2aa5a0";
const BARS = [["BS", "66,9%", 130.7], ["TI", "65,6%", 128.3], ["ZH", "65,2%", 128.3], ["NE", "65,1%", 128.3], ["BL", "64,8%", 127.7], ["GE", "64,6%", 127.1], ["ZG", "64,6%", 127.1], ["VS", "64,3%", 127.1], ["SH", "63,7%", 125.3], ["FR", "63,6%", 124.7], ["SO", "63,2%", 124.1], ["BE", "63,1%", 124.1], ["GR", "63,0%", 124.1], ["AG", "62,2%", 122.3], ["NW", "61,9%", 121.7], ["VD", "61,9%", 121.7], ["LU", "61,6%", 121.1], ["JU", "60,2%", 118.1], ["GL", "58,9%", 115.7], ["TG", "57,2%", 112.1], ["SG", "57,2%", 112.7], ["SZ", "56,8%", 111.5], ["OW", "56,2%", 110.9], ["AR", "55,3%", 109.1], ["UR", "55,1%", 108.5], ["AI", "51,8%", 102.5]];

const barPlot = `<svg viewBox="0 0 290 223.500">` +
  st(74, 4, "Die Kantone Basel-Stadt, Tessin und Zürich sind am weitesten mit dem Impfen", 137, "m") +
  st(74, 12.7, "Anteil der Bevölkerung, der mindestens eine Dosis erhalten hat", 87, "s") + st(74, 17.6, "Stand: 21. September 2021", 38, "s") +
  BARS.map(([k, v, w], i) => `<rect x="80.500" y="${24 + i * 7.41}" width="${w}" height="5.500" fill="${TEAL}"/>` +
    st(74, 26.8 + i * 7.41, k, 4, "s") + `<text x="82" y="${26.8 + i * 7.41}" dominant-baseline="central" font-size="3.800" fill="#fff">${v}</text>`).join("") +
  st(74, 221, "Grafik: wig/dre, Quelle: BAG, Kantone,", 41, "s") + st(116, 221, "Daten herunterladen", 23, "s a") + `</svg>`;

const BUBBLES = [[70.1, 63, 2, "AR", -9, 0], [94.1, 75, 2.4, "OW", 4, 0], [70.7, 83.7, 1.5, "AI", -3, -6], [62.3, 94, 3], [72.5, 93, 2.4], [64.7, 98, 4.2], [48, 99, 1.5], [58.1, 101.3, 2.4], [82.1, 111.3, 2, "GL", 4, 0], [64.7, 117, 2.8], [67.1, 127, 7.2], [63, 127.3, 4.8], [69, 136.5, 4.8], [75.5, 138, 5.4], [101.9, 133, 4.8], [88.7, 141.3, 7.2], [98.9, 148.7, 5.4], [125, 158.7, 5.2], [139, 162.3, 4.2]];
const RINGED = [[85.7, 146.7, 4.2, "FR", -3, 9.5], [55.7, 145, 3, "TI", -9.500, 0], [113.9, 145.5, 3.2, "ZG", -3.500, -7.500], [181.7, 145, 3, "NW", -4.500, -7], [244.6, 144.800, 2.900, "", 0, 0]];
const bubblePlot = `<svg viewBox="0 0 290 223.500"><path d="M28 81H264M28 127H264M137 53V172.500M245 53V172.500" stroke="#e6e6e8" fill="none"/><path d="M28.500 53V172.500H264" fill="none" stroke="#a8a8ae" stroke-width=".8"/>` +
  st(13, 20.5, "Die Kantone testen sehr unterschiedlich", 129, "title") + st(13, 37, "Anteil positiver Tests und Anzahl Tests pro 100’000 Einwohner in den letzen 7 Tagen", 216.5, "t") +
  st(30, 57, "Positivitätsrate", 42, "m") +
  BUBBLES.concat(RINGED).map(([x, y, r, l, dx, dy], i) => `<circle cx="${x}" cy="${y}" r="${r}" fill="${TEAL}" fill-opacity=".82"${i >= BUBBLES.length && l ? ' stroke="#123" stroke-width=".6"' : ""}/>` + (l ? st(x + dx, y + dy, l, 0, "t") : "")).join("") +
  [0, 2000, 4000, 6000, 8000, 10000, 12000].map((v, i) => `<text class="s" x="${29 + i * 36}" y="180" text-anchor="middle" dominant-baseline="central">${v}</text>`).join("") +
  st(15, 81, "10%", 9, "s") + st(22, 127, "5", 0, "s") + st(22, 171.500, "0", 0, "s") +
  st(239.500, 150.500, "Tests pro", 25, "m") + st(242, 158.500, "100’000", 22, "m") + st(235.500, 166.500, "Einwohner", 29, "m") +
  st(13, 200, "Grafik: @duc_qn, amo, wig; Quelle:", 71, "s") + st(86, 200, "BAG, Daten herunterladen", 54, "s a") + `</svg>`;

const POINTS = [[70.100, 32.700, "AI", -2, 6.500], [130.500, 47.700, "GL", 3, 0], [119.300, 75, "OW", -4, -6], [109.700, 82, "", 0, 0], [122.500, 86, "SG", -3, 6], [130.500, 83.700, "TG", 3, 0], [107.300, 91.300, "SZ", -2.500, 6.500], [149.500, 99, "", 0, 0], [164.500, 108.300, "JU", -2, 6], [181, 95.700, "", 0, 0], [188, 103, "", 0, 0], [184.300, 109, "", 0, 0], [183.700, 111.300, "VS", -2.500, 6], [198.700, 97.300, "SO", -3, -5.500], [204.500, 101, "", 0, 0], [198, 109.300, "BE", -2.500, -6], [196.500, 112.500, "GR", -2.500, 6.500], [200, 111, "", 0, 0], [212, 109, "", 0, 0], [211.500, 115.300, "VD", -3, 6.500], [216.500, 111.500, "", 0, 0], [219.500, 111.500, "", 0, 0], [222.500, 100.700, "ZH", -3, -6], [234.500, 113.300, "BS", 3, 0], [223.700, 132, "TI", -2, 6.500]];
const scatterPlot = `<svg viewBox="0 0 290 223.500"><path d="M54 90H251" stroke="#e6e6e8"/><path d="M54 22V156.500H251" fill="none" stroke="#a8a8ae" stroke-width=".8"/><path d="M54 50L250.500 127" stroke="#999" stroke-width=".8"/>` +
  st(38.500, 8.500, "Kantone mit hoher Impfquote verzeichnen weniger Covid-Fälle", 171, "title") + st(55, 25, "Neuinfektionen", 35, "m") + st(81, 56.500, "Trendlinie", 20, "s") + st(226, 151.500, "Impfquote", 25, "m") +
  POINTS.map(([x, y, l, dx, dy]) => `<circle cx="${x}" cy="${y}" r="1.900" fill="#1f958f"/>` + (l ? st(x + dx, y + dy, l, 0, "s") : "")).join("") +
  ["2’000", "1’500", "1’000", "500", "0"].map((l, i) => `<text class="s" x="51" y="${35 + i * 27.500}" text-anchor="end" dominant-baseline="central">${l}</text>`).join("") +
  ["52", "54", "56", "58", "60", "62", "64", "66%"].map((l, i) => `<text class="s" x="${72 + i * 22.600}" y="163" text-anchor="middle" dominant-baseline="central">${l}</text>`).join("") +
  st(38.500, 179.500, "Es werden die neuen positiv getesteten Covid-Fälle pro 100’000 Einwohner der letzten 28 Tage berücksichtigt. Die", 198, "s") +
  st(38.500, 185.300, "Impfquote gibt den Anteil der Personen an, die mindestens eine Dosis erhalten haben.", 149, "s") +
  st(38.500, 197, "Stand: 21. September 2021", 48, "s") + st(38.500, 202.700, "Korrelationskoeffizient: -0,81", 51, "s") + st(38.500, 208.500, "Signifikanz: P-Wert &lt; 0,001 (hoch signifikant)", 78, "s") +
  st(38.500, 216, "Grafik: pat; Quelle:", 32, "s") + st(72, 216, "Bundesamt für Gesundheit, Daten herunterladen", 85, "s a") + `</svg>`;

/* ---- Gallery ---- */
const LOGO = `<svg viewBox="0 0 71 22"><g fill="none" stroke-width="2.400"><path d="M11.500 7.500a6 6 0 1 0 0 8" stroke="#333"/><path d="M22.500 5.500a6 6 0 0 1 5.500 6" stroke="#d08a6a"/><path d="M28 11.500a6 6 0 0 1-5.500 6" stroke="#7fa0c0"/><path d="M22.500 17.500a6 6 0 0 1-5.500-6" stroke="#3f4c60"/><path d="M17 11.500a6 6 0 0 1 5.500-6" stroke="#c45a4c"/><path d="M32 5.500l5 11.500 5-11.500" stroke="#333"/><path d="M47 5v3" stroke="#e0a040"/><path d="M47 8v5" stroke="#4a6ea0"/><path d="M47 15v2.500" stroke="#c8372d"/><path d="M63.500 9.300a3.300 3.300 0 1 0 0 4.400" stroke="#b8433c" stroke-width="1.700"/><circle cx="61" cy="11.500" r="8.500" stroke="#c9c9c9" stroke-width="4" stroke-dasharray="1.200 2.140"/><circle cx="61" cy="11.500" r="6.400" stroke="#c9c9c9" stroke-width="1"/></g></svg>`;
const CAL = `<svg viewBox="0 0 10 11"><path d="M1 2h8v8H1zM1 3h8" fill="none" stroke="#555" stroke-width="1.300"/><path d="M2.500 0v2M7.500 0v2" stroke="#555"/><rect x="5" y="6" width="2.500" height="2.500" fill="#555"/></svg>`;
const pick = (l, w) => `<div class="pick">${t(l, w)}<i class="caret"></i></div>`;
const toggle = (title, w, a, aw, b, bw) => `<div class="toggle"><p>${t(title, w)}</p><div>${t(a, aw)}<span class="switch"><i></i></span>${t(b, bw)}</div></div>`;
const fromTo = cls => `<div class="from-to ${cls}"><span>From</span><span>To</span></div>`;
const card = (plot, l1, w1, l2, w2, m) => `<div class="card"><div><div class="plot">${plot}</div><h5>${t(l1, w1)}<br>${t(l2, w2)}</h5><p>${m.map(a => t(...a)).join("<br>")}</p></div></div>`;
const KT = ["Kantonale Impfquote und Corona-Fälle – Wo viele geimpft", 269, "sind, gibt es weniger Ansteckungen | Tages-Anzeiger", 244.600];
const TA = ["Tages-Anzeiger, 09/24/21", 92];

const gallery = scrolled => `<div class="gallery ${scrolled ? "scrolled" : ""}">
<header class="g-head">${toggle("Published Date", 55, "New", 16, "Old", 12)}${toggle("Labels", 23.400, "On", 10, "Off", 11)}
<nav class="g-nav">${t("COVIC Is", 36.600)}${t("COVIC Contains", 66)}${t("COVIC Visualizer", 70, "on")}${LOGO}${t("Tutorial", 31.400)}${t("COVIC Team", 51)}</nav></header>
<div class="g-body"><aside class="side">
<div class="search">${t("Search Visualizations...", 95)}<svg viewBox="0 0 28 13"><g fill="none" stroke="#d9c3a8" stroke-width="1.100"><circle cx="6.500" cy="5" r="4.200"/><path d="M9.500 8.200l3.500 4"/><circle cx="21" cy="6.500" r="5"/><path d="M19 4.500l4 4m0-4l-4 4"/></g></svg></div>
<p class="go">${t("SEARCH", 36)}</p><h4>${t("ARTICLE ATTRIBUTES", 80)}</h4>
${pick("Source Type (8)", 64)}${pick("Country (71)", 51.500)}${pick("Language (32)", 59)}${pick("Publisher (856)", 62.500)}${pick("Subject (11)", 50)}${pick("Article Technique (4)", 85.500)}
<p class="range">${t("Date Range", 47)}</p>
${scrolled ? "" : `<div class="ghosts">${fromTo("").repeat(4)}</div>`}${fromTo("from")}
<div class="dates"><div>${t("01/01/2020", 49)}${CAL}</div><div>${t("11/14/2021", 48)}${CAL}</div></div>
<h4 class="figs">${t("FIGURE ATTRIBUTES", 76)}</h4>
${pick("Visualization Type (30)", 94)}${pick("Visual Technique (4)", 83.500)}${pick("Interaction Technique (4)", 103)}
<div class="acts"><span class="dim">${t("APPLY", 24)}</span><span>${t("RESET", 24.500)}</span></div>
<p class="fb">${t("Feedback, Comments, or Bug Reports", 146.500)}</p></aside>
<div class="cards">
${card(barPlot, ...KT, [TA, ["Bar Chart", 34], ["3073-2.png", 41]])}
${card(bubblePlot, ...KT, [TA, ["Bubble Chart, Scatter Plot", 93.500], ["3073-3.png", 41]])}
${card(scatterPlot, ...KT, [TA, ["Scatter Plot", 42.500], ["3073-1.png", 41]])}
${card(FIGURES.guidance, "COVID-19 is of less concern, greater threat to unvaccinated", 274.600, "Americans | Pew Research Center", 155.500, [["Pew Research Center, 09/24/21", 113.500], ["Dumbbell Chart", 56], ["3138-3.png", 41]])}
${scrolled ? '<div class="card"></div><div class="card"></div>' : ""}
</div></div></div>`;

/* ---- Detail windows ---- */
const TABS = [["FIGURE", 46, 29], ["IN ARTICLE", 61.700, 43.300], ["PAGE", 38.300, 20.500], ["VISIT", 38.300, 19.800]];
const sheet = (active, lines, body) => `<div class="sheet">
<div class="tabs">${TABS.map(([l, w, tw], i) => `<span class="${i === active ? "off" : ""}" style="width:${w}px"><b data-w="${tw}">${l}</b></span>`).join("")}<svg viewBox="0 0 12 12"><g fill="none" stroke="#c9a67e" stroke-width=".9"><circle cx="6" cy="6" r="5.300"/><path d="M4.200 4.200l3.600 3.600m0-3.600L4.200 7.800"/></g></svg></div>
<div class="arrows"><svg viewBox="0 0 11 9"><path d="M10.500 4.500H1M5 .7L1 4.500l4 3.800" fill="none" stroke="#c9a67e" stroke-width="1.100"/></svg><svg viewBox="0 0 11 9"><path d="M.5 4.500H10M6 .7l4 3.800-4 3.800" fill="none" stroke="#c9a67e" stroke-width="1.100"/></svg></div>
<div class="info"><div><p>${t("Pew Research Center, USA: English", 126.500)}</p><h6>${t("COVID-19 is of less concern, greater threat to unvaccinated Americans | Pew Research Center", 483.500)}</h6>${lines.map(a => `<p class="line">${a ? t(...a) : ""}</p>`).join("")}</div>
<div class="meta"><div class="pill">NGO</div><p>${t("09/24/21", 33.500)}</p><p>${t("Medical Supplies, Non-Medical Social", 135.500)}</p></div></div>${body}</div>`;
const entry = (n, gap, figure, gapF) => `<div class="entry" style="margin-top:${gap}px">${t(`3138-${n}.png`, 41)}${t("Dumbbell Chart", 56)}</div><div style="padding-top:${gapF}px">${FIGURES[figure]}</div>`;

const VIEWS = {
  gallery: () => gallery(false),
  "gallery-scrolled": () => gallery(true),
  figure: () => sheet(0, [["3138-3.png", 41], ["Dumbbell Chart", 56]], `<div class="frame">${FIGURES.guidance}</div>`),
  article: () => sheet(1, [null, ["3 Figures", 33.500]], `<div class="entries">${entry(1, 19.800, "threat", 4.800)}${entry(2, 16.600, "spread", 7.600)}${entry(3, 15.300, "guidance", 4)}</div>`),
  page: () => sheet(2, [], `<div class="excerpt"></div>`),
};

/* ---- PDF ---- */
const lines = a => a.map(([s, w]) => t(s, w)).join("<br>");
document.getElementById("paper").innerHTML = `
<div class="stamp">${t('bioRxiv preprint doi: <a>https://doi.org/10.1101/2021.09.11.459844</a>; this version posted October 15, 2021. The copyright holder for this preprint', 409.500)}${t("(which was not certified by peer review) is the author/funder, who has granted bioRxiv a license to display the preprint in perpetuity. It is made", 417)}${t("available under a<a>CC-BY-NC-ND 4.0 International license</a>.", 168)}</div>
<h1>${lines([["Rapid and parallel adaptive mutations in spike S1", 353], ["drive clade success in SARS-CoV-2", 249]])}</h1>
<p class="auth">${t("Kathryn E. Kistler<sup>1,3,*</sup>, John Huddleston<sup>1</sup>, Trevor Bedford<sup>1,2</sup>", 242)}</p>
<p class="aff">${lines([["<sup>1</sup>Vaccine and Infectious Disease Division, Fred Hutchinson Cancer Research Center, Seattle, United States", 328.500], ["<sup>2</sup>Molecular and Cellular Biology Program, University of Washington, Seattle, United States", 283.500], ["*Corresponding author: kistlerk@uw.edu", 126.500]])}</p>
<h2>${t("Abstract", 36)}</h2>
<p class="abs">${lines([["Despite the appearance of variant SARS-CoV-2 viruses with altered receptor-", 296], ["binding or antigenic phenotypes, traditional methods for detecting adaptive evolu-", 309], ["tion from sequence data do not pick up strong signals of positive selection. Here, we", 309], ["present a new method for identifying adaptive evolution on short evolutionary time", 309], ["scales with densely-sampled populations. We apply this method to SARS-CoV-2 to", 309], ["perform a comprehensive analysis of adaptively-evolving regions of the genome. We", 309], ["find that spike S1 is a focal point of adaptive evolution, but also identify positively-", 309], ["selected mutations in other genes that are sculpting the evolutionary trajectory of", 309], ["SARS-CoV-2. Protein-coding mutations in S1 are temporally-clustered and, in 2021,", 309], ["the ratio of nonsynonymous to synonymous divergence in S1 is more than 4 times", 309], ["greater than in the equivalent influenza HA1 subunit.", 195]])}</p>
<h3>${t("Introduction", 73.500)}</h3>
<p class="txt">${lines([["After 20 months of global circulation, basal lineages of SARS-CoV-2 have been almost", 354], ["completely replaced by derived, variant lineages. These lineages are classified by the WHO", 354], ["as variants of concern (VOCs) or variants of interest (VOIs) based on genetic, phenotypic", 354], ["and epidemiological differences [1]. The effort to track the spread of these variants (and of", 354], ["the pandemic in general) through genomic epidemiology has resulted in a massive corpus", 354], ["of sequenced viral genomes. In the GISAID EpiCoV database alone, there are 2.5 million", 354], ["sequences and counting as of the end of July 2021 [2]. This thorough sampling offers", 354], ["an opportunity to investigate the evolutionary dynamics of a virus as it entered a naive", 354], ["population, spread rampantly, and, subsequently, began to transmit through previously", 354], ["exposed hosts. Here, we are particularly interested in whether SARS-CoV-2 viruses show", 354], ["phylogenetic evidence of adaptive evolution during the first year and a half of transmission", 354], ["and in the presence of mounting immunity in humans.", 216]])}</p>
<p class="txt">${lines([["Seasonal influenza and seasonal coronaviruses both exhibit continual adaptive evolution", 354], ["during endemic circulation in the human population. In the case of influenza H3N2,", 354], ["transmission through an exposed host population results in adaptive evolution within", 354], ["hemagglutinin (HA). The HA1 subunit of hemagglutinin both mediates binding to host", 354], ["cell receptors and is the primary target for neutralizing antibodies. Thus, in the context", 354], ["of an exposed host, selection for receptor binding avidity [3] and for escape from humoral", 354], ["immunity [4] drive fixation of mutations in the HA1 subunit. The coronavirus protein", 354], ["subunit equivalent in function to HA1 is spike S1. Previously, we showed that at least two", 354]])}</p>
<p class="num">1</p>`;

const rule = (y, w = 48, x = 10, o = .55) => `<rect x="${x}" y="${y}" width="${w}" height=".9" fill="#555" opacity="${o}"/>`;
const rows = (from, to, step, ...r) => { let s = ""; for (let y = from; y <= to; y += step) s += rule(y, ...r); return s; };
const THUMBS = [
  rule(11) + rule(13, 36) + rule(16, 38, 10, .4) + rule(19, 30, 10, .3) + rule(27, 6, 31) + rows(30, 43, 1.6, 42, 13, .35) + rule(47, 10) + rows(50, 78, 1.8),
  rows(8, 33, 1.7) + rows(35, 51, 1.7) + rule(54, 6) + rows(58, 75, 1.7),
  `<g fill="none" stroke="#667">${[12, 29, 46].map(x => [8, 19, 31].map(y => `<path d="M${x} ${y}v8h11" stroke-width=".5" opacity=".7"/><path d="M${x + 1} ${y + 7}l4-4 5-2" stroke="#4a66c0" stroke-width=".6" opacity=".6"/>`).join("")).join("")}</g>` + rows(46, 80, 1.8),
  rows(8, 33, 1.8) + rows(35, 48, 1.8) + rows(51, 72, 1.8),
  rule(18) + rule(20) + rule(22, 24) + `<rect x="19" y="24.500" width="30" height="1.600" fill="#222"/><rect x="19" y="65.500" width="30" height="1.200" fill="#222"/>` + rows(28, 64, 2.4, 4, 20) + rows(28, 64, 2.4, 6, 29) + rows(28, 64, 2.4, 7, 41),
  rows(8, 38, 1.8) + `<path d="M15 41v15h40" fill="none" stroke="#444" stroke-width=".6"/><path d="M17 54l12-1 10-3 7-7 6-1" fill="none" stroke="#4a66c0" stroke-width=".8"/><path d="M22 54h30" stroke="#c58a4a" stroke-width="1.200"/>`,
];
document.getElementById("thumbs").innerHTML = THUMBS.map((s, i) => `<div class="thumb"><svg viewBox="0 0 68 87.500" preserveAspectRatio="none"><rect width="68" height="87.500" fill="#fff"/>${rule(1.5, 54, 7, .6)}<rect x="25" y="3" width="20" height=".8" fill="#33c" opacity=".6"/>${s}</svg>${i < 5 ? `<p>${i + 1}</p>` : ""}</div>`).join("");

for (const el of document.querySelectorAll("[data-figure]")) el.innerHTML = FIGURES[el.dataset.figure];
for (const el of document.querySelectorAll("[data-view]")) el.innerHTML = VIEWS[el.dataset.view]();

/* Sets each labelled run to its column measure: first by size, within a small range, then by tracking. */
const board = document.querySelector(".board");
const unit = board.getBoundingClientRect().width / 4202;
const widthOf = el => el.getBoundingClientRect().width / unit;
const fitted = [...document.querySelectorAll("[data-w]")];
for (const el of fitted) {
  const scale = Math.min(1.1, Math.max(.93, el.dataset.w / widthOf(el)));
  el.style.fontSize = `${(scale * 100).toFixed(2)}%`;
  if (el.tagName === "B" || el.tagName === "SMALL") el.style.fontSize = `calc(${getComputedStyle(el.parentElement).fontSize} * ${scale.toFixed(4)})`;
}
for (const el of fitted) el.style.letterSpacing = ((el.dataset.w - widthOf(el)) / el.textContent.length).toFixed(3) + "px";
document.querySelector(".excerpt").append(document.getElementById("site").cloneNode(true));
```
